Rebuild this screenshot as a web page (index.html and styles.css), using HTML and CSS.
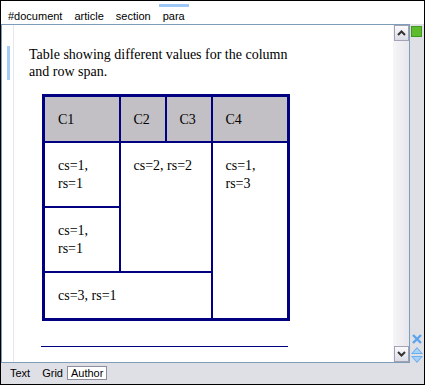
FILE: index.html
```html
<!DOCTYPE html>
<html lang="en">
<head>
    <meta charset="UTF-8">
    <title>Author view</title>
    <link rel="stylesheet" href="styles.css">
</head>
<body>
<div class="window">
    <div class="crumbs">
        <span class="crumb">#document</span>
        <span class="crumb">article</span>
        <span class="crumb">section</span>
        <span class="crumb active">para</span>
    </div>
    <div class="main">
        <div class="frame">
            <div class="content">
                <p class="para">Table showing different values for the column and row span.</p>
                <table class="grid">
                    <colgroup>
                        <col class="col-wide">
                        <col class="col-narrow">
                        <col class="col-narrow">
                        <col class="col-last">
                    </colgroup>
                    <tr class="head">
                        <td>C1</td>
                        <td>C2</td>
                        <td>C3</td>
                        <td>C4</td>
                    </tr>
                    <tr>
                        <td>cs=1,<br>rs=1</td>
                        <td colspan="2" rowspan="2">cs=2, rs=2</td>
                        <td rowspan="3">cs=1,<br>rs=3</td>
                    </tr>
                    <tr>
                        <td>cs=1,<br>rs=1</td>
                    </tr>
                    <tr>
                        <td colspan="3">cs=3, rs=1</td>
                    </tr>
                </table>
                <div class="rule"></div>
            </div>
            <div class="scrollbar">
                <div class="scroll-btn">
                    <svg width="9" height="6" viewBox="0 0 9 6"><polyline points="1,5 4.5,1.5 8,5" fill="none" stroke="#333" stroke-width="2"/></svg>
                </div>
                <div class="track"></div>
                <div class="scroll-btn">
                    <svg width="9" height="6" viewBox="0 0 9 6"><polyline points="1,1 4.5,4.5 8,1" fill="none" stroke="#333" stroke-width="2"/></svg>
                </div>
            </div>
        </div>
        <div class="side">
            <div class="status"></div>
            <div class="side-icons">
                <svg width="10" height="10" viewBox="0 0 10 10"><path d="M1 1 L9 9 M9 1 L1 9" stroke="#5ca4ec" stroke-width="2.4" fill="none"/></svg>
                <svg width="12" height="16" viewBox="0 0 12 16"><path d="M6 0 L12 7 L0 7 Z M0 9 L12 9 L6 16 Z" fill="#6aafef"/><path d="M6 1.5 L10 6 L2 6 Z M2 10 L10 10 L6 14.5 Z" fill="#a9d2f7"/></svg>
            </div>
        </div>
    </div>
    <div class="tabs">
        <span class="tab">Text</span>
        <span class="tab">Grid</span>
        <span class="tab active">Author</span>
    </div>
</div>
</body>
</html>
```

FILE: styles.css
```css
body {
    margin: 0;
    font-family: "Liberation Sans", Arial, sans-serif;
}

.window {
    width: 425px;
    height: 385px;
    box-sizing: border-box;
    border: 1px solid #000;
    display: flex;
    flex-direction: column;
    background: #dfdfe6;
}

/* breadcrumb bar */
.crumbs {
    height: 23px;
    background: #fff;
    display: flex;
    padding-left: 3px;
    font-size: 11px;
    color: #000;
}

.crumb {
    margin-top: 3px;
    padding: 3px 4px 0 4px;
    margin-right: 4px;
    border-top: 3px solid transparent;
    line-height: 12px;
}

.crumb.active {
    border-top-color: #9cc7f6;
}

/* editing area */
.main {
    flex: 1;
    display: flex;
    min-height: 0;
}

.frame {
    width: 409px;
    box-sizing: border-box;
    border: 1px solid #7f9db9;
    display: flex;
    background: #fff;
}

.content {
    flex: 1;
    overflow: hidden;
    background: linear-gradient(#e8e8ec, #e8e8ec) 11px 0 / 1px 100% no-repeat;
    font-family: "Liberation Serif", "Times New Roman", serif;
    font-size: 14px;
    color: #000;
}

.para {
    margin: 21px 0 0 5px;
    padding-left: 19px;
    width: 268px;
    border-left: 3px solid #a6cbf5;
    line-height: 17px;
}

.grid {
    margin: 14px 0 0 40px;
    border-collapse: collapse;
    table-layout: fixed;
    width: 245px;
    border: 3px solid #000080;
}

.col-wide {
    width: 76px;
}

.col-narrow {
    width: 46px;
}

.col-last {
    width: 77px;
}

.grid td {
    border: 2px solid #000080;
    padding: 14px 13px 13px 13px;
    line-height: 18px;
    vertical-align: top;
}

.grid .head td {
    padding-bottom: 12px;
    background: #c2c0c4;
    vertical-align: middle;
}

.rule {
    margin: 25px 0 0 39px;
    width: 247px;
    border-top: 1px solid #000080;
}

/* scrollbar */
.scrollbar {
    width: 16px;
    display: flex;
    flex-direction: column;
    background: linear-gradient(to right, #f6f6f9, #e6e6ec);
}

.scroll-btn {
    width: 13px;
    height: 14px;
    margin-left: 1px;
    border: 1px solid #a2a2b4;
    background: linear-gradient(#fbfbfd, #dcdce6);
    display: flex;
    align-items: center;
    justify-content: center;
}

.track {
    flex: 1;
}

/* right column */
.side {
    flex: 1;
    display: flex;
    flex-direction: column;
    justify-content: space-between;
    align-items: flex-start;
}

.status {
    width: 9px;
    height: 9px;
    margin: 2px 0 0 1px;
    background: #5dbb2d;
    border: 1px solid #3f9a1c;
}

.side-icons {
    display: flex;
    flex-direction: column;
    align-items: center;
    gap: 3px;
    margin-left: 1px;
}

/* bottom tabs */
.tabs {
    height: 21px;
    box-sizing: border-box;
    display: flex;
    align-items: flex-start;
    padding: 3px 0 0 5px;
    gap: 4px;
    font-size: 11px;
}

.tab {
    padding: 0 3px;
    border: 1px solid transparent;
    line-height: 12px;
}

.tab.active {
    margin-left: -4px;
    background: #fff;
    border-color: #8c8c9c;
}
```
